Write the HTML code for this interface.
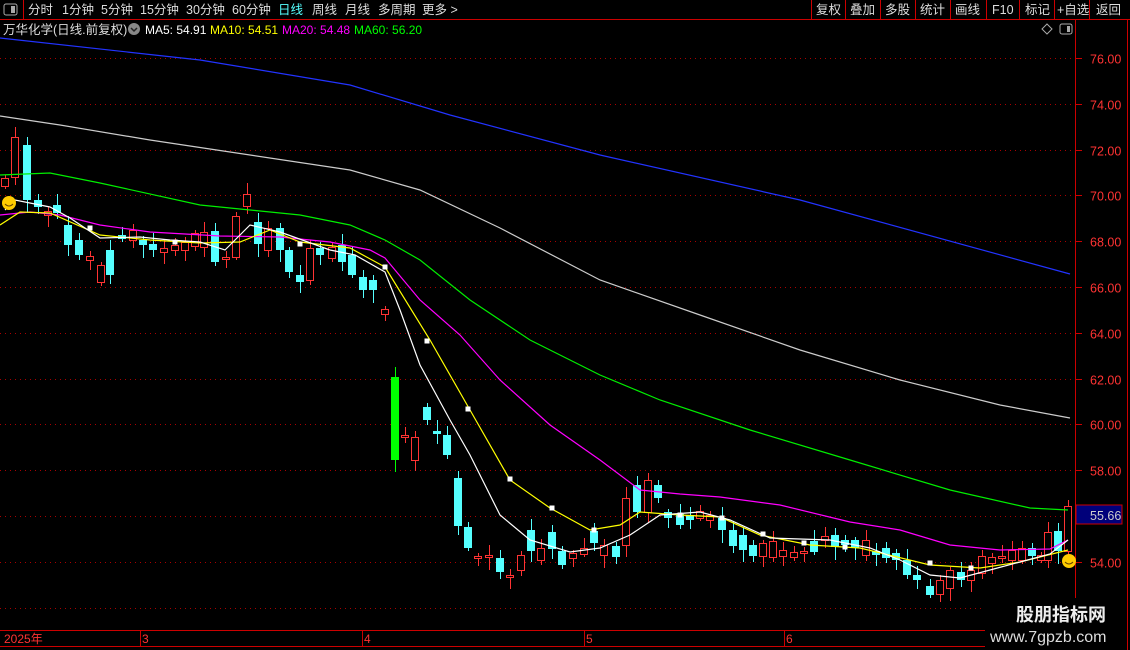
<!DOCTYPE html><html><head><meta charset="utf-8"><style>
body{margin:0;background:#000;width:1130px;height:650px;overflow:hidden;font-family:"Liberation Sans","Noto Sans CJK SC",sans-serif}
svg{position:absolute;left:0;top:0}
</style></head><body>
<svg id="s" width="1130" height="650" xmlns="http://www.w3.org/2000/svg">
<g font-family="Liberation Sans, Noto Sans CJK SC, sans-serif">
<rect x="0" y="0" width="1130" height="20" fill="#000"/>
<line x1="0" y1="19.5" x2="1130" y2="19.5" stroke="#c00"/>
<line x1="23.5" y1="0" x2="23.5" y2="20" stroke="#c00"/>
<rect x="4" y="4" width="13" height="11" rx="2" fill="none" stroke="#aaa"/><rect x="11" y="6" width="4" height="7" fill="#aaa"/>
<g font-size="12.5" fill="#ddd">
<text x="28" y="14">分时</text><text x="62" y="14">1分钟</text><text x="101" y="14">5分钟</text><text x="140" y="14">15分钟</text><text x="186" y="14">30分钟</text><text x="232" y="14">60分钟</text>
<text x="278" y="14" fill="#5ff">日线</text><text x="312" y="14">周线</text><text x="345" y="14">月线</text><text x="378" y="14">多周期</text><text x="422" y="14">更多 &gt;</text>
<text x="816" y="14">复权</text><text x="850" y="14">叠加</text><text x="885" y="14">多股</text><text x="920" y="14">统计</text><text x="955" y="14">画线</text><text x="992" y="14">F10</text><text x="1025" y="14">标记</text><text x="1057" y="14">+自选</text><text x="1096" y="14">返回</text>
</g>
<g stroke="#c00"><line x1="811.5" y1="0" x2="811.5" y2="20"/><line x1="845.5" y1="0" x2="845.5" y2="20"/><line x1="880.5" y1="0" x2="880.5" y2="20"/><line x1="915.5" y1="0" x2="915.5" y2="20"/><line x1="950.5" y1="0" x2="950.5" y2="20"/><line x1="986.5" y1="0" x2="986.5" y2="20"/><line x1="1019.5" y1="0" x2="1019.5" y2="20"/><line x1="1054.5" y1="0" x2="1054.5" y2="20"/><line x1="1089.5" y1="0" x2="1089.5" y2="20"/></g>
<text x="3" y="34" font-size="12.5" fill="#ddd">万华化学(日线.前复权)</text>
<circle cx="134" cy="29" r="6" fill="#888"/><path d="M131 28l3 3 3-3" stroke="#222" fill="none" stroke-width="1.5"/>
<g font-size="12"><text x="145" y="34" fill="#fff">MA5: 54.91</text><text x="210" y="34" fill="#ff0">MA10: 54.51</text><text x="282" y="34" fill="#f0f">MA20: 54.48</text><text x="354" y="34" fill="#0f0">MA60: 56.20</text></g>
<path d="M1047 24l5 5-5 5-5-5z" fill="none" stroke="#aaa"/><rect x="1060" y="24" width="12" height="10" rx="2" fill="none" stroke="#aaa"/><rect x="1067" y="26" width="3" height="6" fill="#aaa"/>
<line x1="1075.5" y1="20" x2="1075.5" y2="650" stroke="#c00"/>
<line x1="1127.5" y1="20" x2="1127.5" y2="650" stroke="#c00"/>
<line x1="0" y1="630.5" x2="1075" y2="630.5" stroke="#c00"/>
<line x1="0" y1="646.5" x2="1075" y2="646.5" stroke="#c00"/>
<g font-size="12" fill="#f33"><text x="4" y="643">2025年</text><text x="142" y="643">3</text><text x="364" y="643">4</text><text x="586" y="643">5</text><text x="786" y="643">6</text></g>
<g stroke="#c00"><line x1="140.5" y1="630" x2="140.5" y2="646"/><line x1="362.5" y1="630" x2="362.5" y2="646"/><line x1="584.5" y1="630" x2="584.5" y2="646"/><line x1="784.5" y1="630" x2="784.5" y2="646"/></g>
<g id="grid"></g><g id="c"></g><g id="ma"></g>
<rect x="1076" y="505" width="46" height="19" fill="#00007a" stroke="#c00"/>
<text x="1090" y="520" font-size="12.5" fill="#ccc">55.66</text>
<circle cx="9" cy="203" r="7" fill="#fc0"/><path d="M5 204q4 4 8 0" stroke="#640" fill="none"/>
<circle cx="1069" cy="561" r="7" fill="#fc0"/><path d="M1065 562q4 4 8 0" stroke="#640" fill="none"/>
<rect x="985" y="598" width="140" height="52" fill="#000"/>
<text x="1016" y="621" font-size="18" font-weight="bold" fill="#eee">股朋指标网</text>
<text x="990" y="642" font-size="16" fill="#ddd">www.7gpzb.com</text>
</g></svg>
<script>
var NS="http://www.w3.org/2000/svg";function el(p,t,a){var e=document.createElementNS(NS,t);for(var k in a)e.setAttribute(k,a[k]);p.appendChild(e);return e}
var g=document.getElementById('grid'),s=document.getElementById('s');
for(var p=76;p>=52;p-=2){var y=Math.round(58+(76-p)*22.9)+.5;el(g,'line',{x1:0,y1:y,x2:1075,y2:y,stroke:'#a00','stroke-dasharray':'1 4'});el(g,'line',{x1:1075,y1:y,x2:1082,y2:y,stroke:'#c00'});
if(p!=56&&p!=52){var t=el(g,'text',{x:1090,y:y+5,'font-size':12.5,fill:'#f33'});t.textContent=p.toFixed(2)}}
var C=[[5,186,178,1],[15,177,137,1],[27,145,200,0],[38,200,207,0],[48,215,211,1],[57,205,213,0],[68,225,245,0],[79,240,255,0],[90,260,256,1],[101,282,265,1],[110,250,275,0],[122,235,239,0],[133,240,230,1],[143,240,245,0],[153,244,250,0],[164,252,248,1],[175,250,245,1],[185,250,242,1],[195,246,233,1],[204,247,232,1],[215,231,262,0],[226,259,257,1],[236,257,216,1],[247,206,194,1],[258,222,244,0],[268,250,228,1],[280,228,250,0],[289,250,272,0],[300,275,282,0],[310,280,248,1],[320,248,255,0],[332,258,247,1],[342,245,262,0],[352,255,275,0],[363,277,290,0],[373,280,290,0],[385,314,309,1],[395,377,460,2],[405,437,435,1],[415,460,437,1],[427,407,420,0],[437,431,434,0],[447,435,455,0],[458,478,526,0],[468,527,548,0],[478,558,556,1],[489,557,555,1],[500,558,572,0],[510,577,575,1],[521,570,555,1],[531,530,551,0],[541,560,548,1],[552,532,549,0],[562,551,565,0],[573,558,553,1],[584,554,548,1],[594,531,543,0],[604,555,545,1],[616,546,557,0],[626,545,498,1],[637,485,512,0],[648,512,480,1],[658,485,498,0],[668,512,518,0],[680,514,525,0],[690,515,520,0],[700,518,511,1],[710,520,515,1],[722,518,530,0],[733,530,546,0],[743,535,550,0],[753,545,556,0],[763,556,543,1],[773,557,541,1],[783,556,550,1],[794,557,552,1],[804,553,551,1],[814,541,552,0],[825,540,536,1],[835,535,547,0],[845,540,545,0],[855,540,548,0],[866,555,540,1],[876,551,555,0],[886,548,558,0],[896,553,560,0],[907,560,575,0],[917,575,580,0],[930,586,595,0],[940,594,580,1],[950,588,570,1],[961,572,580,0],[971,580,570,1],[982,573,556,1],[992,563,557,1],[1002,558,556,1],[1012,560,550,1],[1022,560,548,1],[1032,548,556,0],[1041,560,555,1],[1048,560,532,1],[1058,531,551,0],[1068,551,506,1]];
var c=document.getElementById('c');
C.forEach(function(d,i){var x=d[0],a=Math.min(d[1],d[2]),b=Math.max(d[1],d[2]);var col=d[3]==1?'#f33':d[3]==2?'#0f0':'#5ff';
var hi=a-3-(i*7%9),lo=b+3+(i*5%11);
el(c,'line',{x1:x+.5,y1:hi,x2:x+.5,y2:lo,stroke:col});
if(b-a<2)b=a+2;
if(d[3]==1)el(c,'rect',{x:x-3.5,y:a+.5,width:7,height:b-a,fill:'#000',stroke:col});
else el(c,'rect',{x:x-4,y:a,width:8,height:b-a,fill:col});});
var M=[['#23f',[[0,38],[200,60],[350,85],[450,115],[600,155],[800,200],[1070,274]]],
['#ccc',[[0,116],[60,125],[150,140],[250,155],[350,170],[420,190],[500,228],[600,280],[700,315],[800,350],[900,380],[1000,405],[1070,418]]],
['#0e0',[[0,175],[50,173],[100,183],[200,205],[300,215],[350,225],[385,240],[420,260],[470,300],[530,340],[600,375],[660,400],[750,430],[850,460],[950,490],[1030,508],[1068,510]]],
['#f0f',[[0,215],[30,212],[60,215],[100,225],[150,232],[220,236],[280,237],[330,242],[370,250],[385,258],[420,300],[460,335],[500,380],[550,425],[600,460],[640,490],[680,494],[720,497],[780,505],[850,522],[900,530],[950,545],[1000,550],[1050,549],[1068,540]]],
['#ff0',[[0,225],[20,212],[50,213],[100,235],[150,240],[200,243],[240,242],[270,230],[300,242],[350,248],[385,267],[430,340],[470,410],[510,480],[550,508],[590,530],[620,525],[640,512],[680,515],[720,517],[760,535],[810,545],[860,548],[930,565],[980,568],[1020,562],[1068,550]]],
['#fff',[[5,210],[15,200],[50,207],[70,218],[100,238],[140,237],[170,240],[200,242],[225,250],[250,225],[280,232],[330,250],[355,255],[385,272],[400,310],[420,365],[450,420],[470,455],[500,515],[530,540],[570,552],[600,548],[630,535],[660,515],[700,512],[730,520],[770,538],[830,540],[870,548],[900,560],[930,575],[960,578],[990,570],[1020,562],[1050,554],[1068,540]]]];
var m=document.getElementById('ma');
M.forEach(function(l){el(m,'polyline',{points:l[1].map(function(p){return p.join(',')}).join(' '),fill:'none',stroke:l[0],'stroke-width':1.2})});
[[90,228],[175,242],[300,244],[385,267],[427,341],[468,409],[510,479],[552,508],[594,530],[680,515],[722,518],[763,534],[804,543],[845,547],[930,563],[971,568]].forEach(function(p){el(m,'rect',{x:p[0]-2.5,y:p[1]-2.5,width:5,height:5,fill:'#fff'})});
</script>
</body></html>
